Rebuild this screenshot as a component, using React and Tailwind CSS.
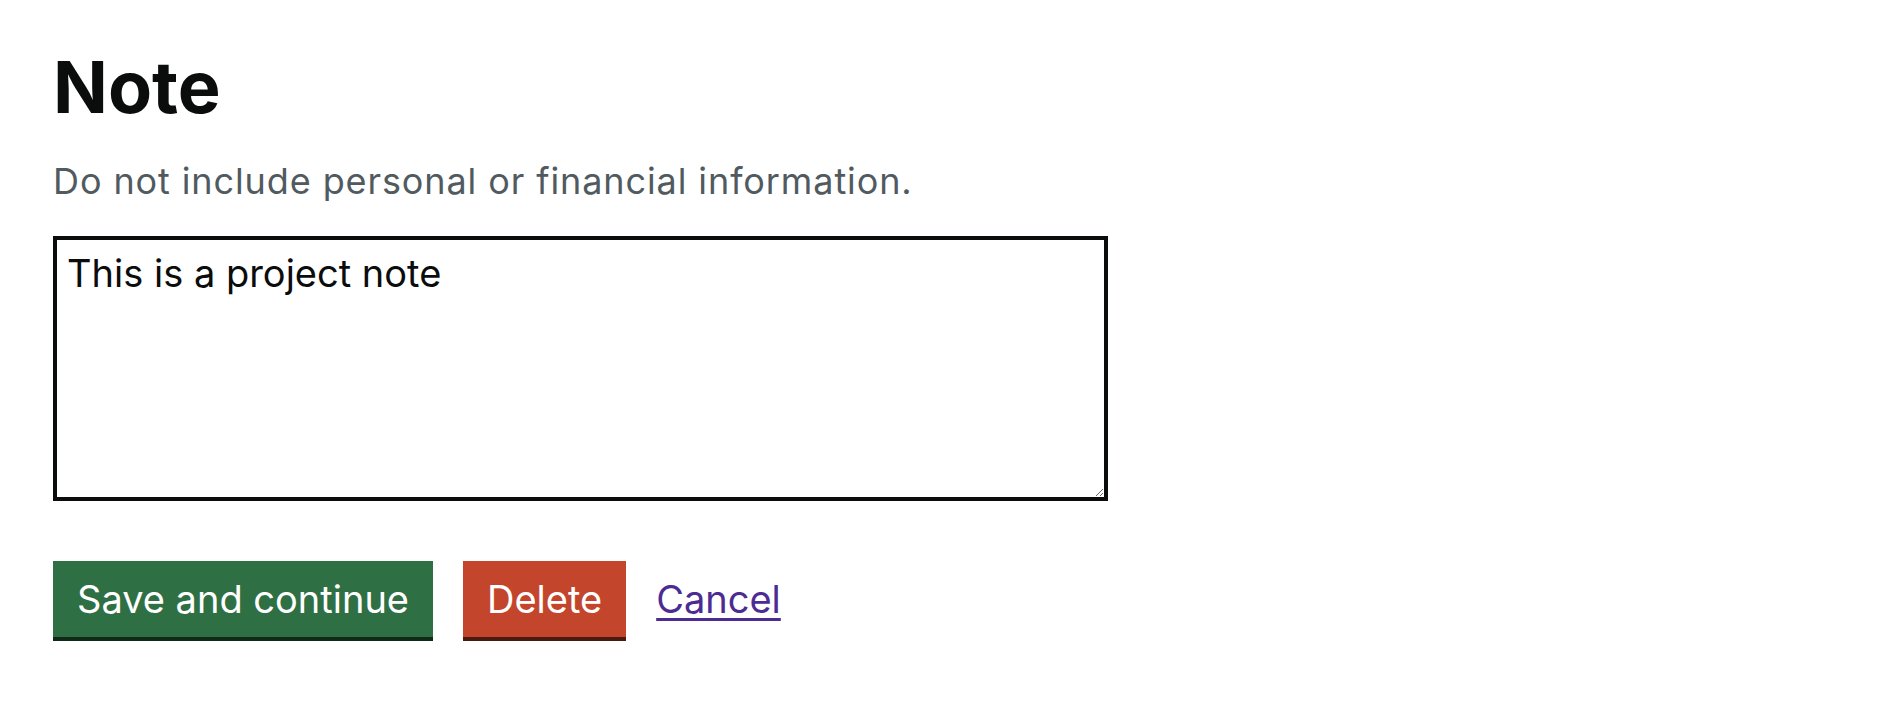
import { useState } from 'react';

const App = () => {
    const [note, setNote] = useState('This is a project note');

    return (
        <div className="min-h-screen bg-white pt-[47px] pl-[53px] font-['Inter',sans-serif] text-[#0b0c0c]">
            {/* TITRE */}
            <h1 className="text-[72px] leading-[80px] font-bold mb-[29px]">Note</h1>

            {/* AIDE */}
            <p className="text-[36px] leading-[50px] tracking-[0.9px] text-[#505a5f] mb-[30px]">
                Do not include personal or financial information.
            </p>

            {/* ZONE DE TEXTE */}
            <textarea
                value={note}
                onChange={(e) => setNote(e.target.value)}
                className="block w-[1055px] h-[265px] border-4 border-[#0b0c0c] p-[10px] text-[38px] leading-[47.5px] text-[#0b0c0c] font-['Inter',sans-serif] outline-none"
            />

            {/* ACTIONS */}
            <div className="flex items-start mt-[60px]">
                <button className="bg-[#2f6f44] text-white text-[38px] leading-[45px] px-6 pt-[16px] pb-[15px] shadow-[0_4px_0_#0f2a16] mr-[30px]">
                    Save and continue
                </button>
                <button className="bg-[#c3452c] text-white text-[38px] leading-[45px] px-6 pt-[16px] pb-[15px] shadow-[0_4px_0_#4a1a0f] mr-[30px]">
                    Delete
                </button>
                <a
                    href="#"
                    className="text-[#4c2c92] text-[38px] leading-[45px] pt-[16px] underline decoration-[3px] underline-offset-[5px]"
                >
                    Cancel
                </a>
            </div>
        </div>
    );
};

export default App;
